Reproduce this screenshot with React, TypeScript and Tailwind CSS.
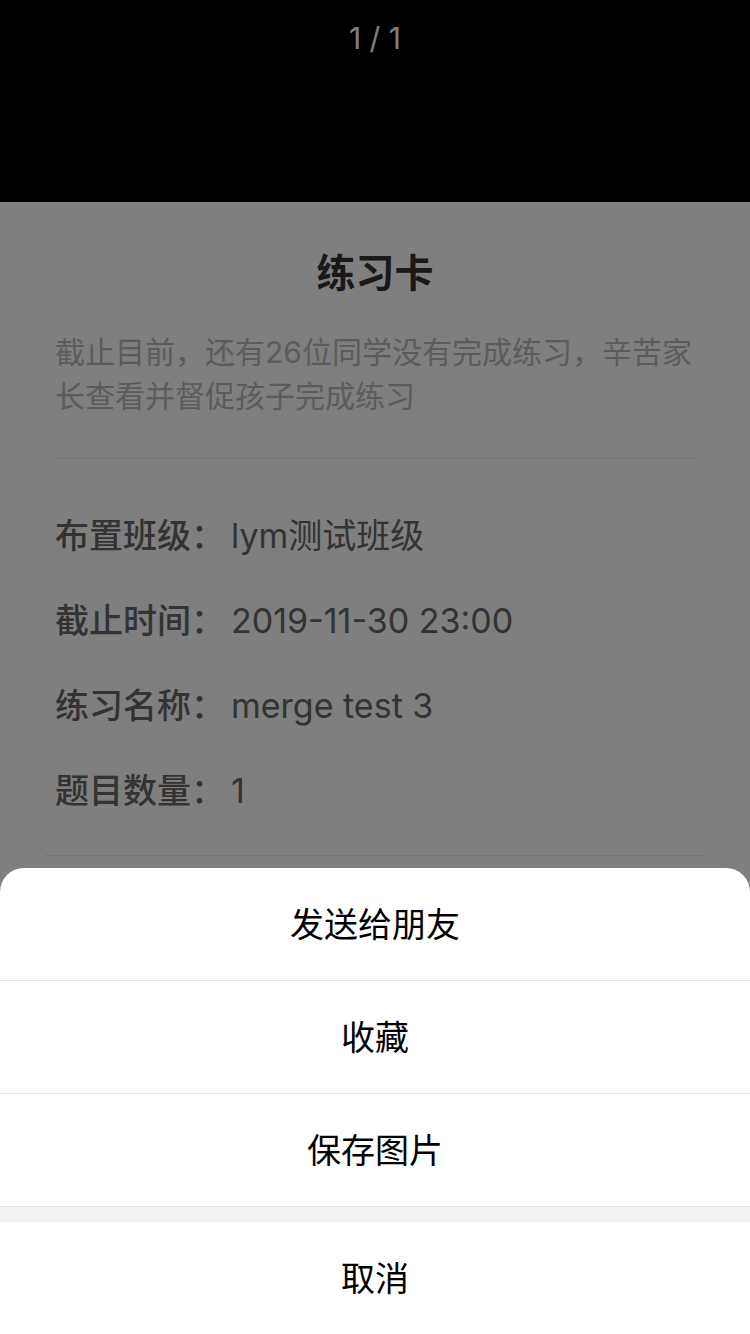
const font = { fontFamily: 'Inter, "Noto Sans CJK SC", sans-serif' };

const rows = [
  { label: '布置班级：', value: 'lym测试班级' },
  { label: '截止时间：', value: '2019-11-30 23:00' },
  { label: '练习名称：', value: 'merge test 3' },
  { label: '题目数量：', value: '1' },
];

const actions = ['发送给朋友', '收藏', '保存图片'];

export default function App() {
  return (
    <div className="relative h-[1334px] w-[750px] overflow-hidden bg-white" style={font}>
      {/* preview header */}
      <div className="flex h-[202px] justify-center bg-black pt-[20px]">
        <span className="text-[30px] leading-[36px] text-white">1 / 1</span>
      </div>

      {/* practice card */}
      <div className="flex flex-col bg-white pt-[47px]">
        <h1 className="text-center text-[39px] font-bold leading-[48px] text-[#333]">练习卡</h1>
        <p className="mx-[55px] mt-[33px] text-[30px] leading-[44px] text-[#b9b9b9]">
          截止目前，还有26位同学没有完成练习，辛苦家长查看并督促孩子完成练习
        </p>
        <div className="mx-[55px] mt-[40px] h-px bg-[#e8e8e8]" />
        <div className="mx-[55px] mt-[54px] flex flex-col gap-[41px]">
          {rows.map((r) => (
            <div key={r.label} className="flex h-[44px] items-center text-[34px] text-[#666]">
              <span className="w-[176px] font-medium">{r.label}</span>
              <span>{r.value}</span>
            </div>
          ))}
        </div>
        <div className="mx-[45px] mt-[43px] h-px bg-[#e8e8e8]" />
      </div>

      {/* mask */}
      <div className="absolute inset-0 bg-black/50" />

      {/* action sheet */}
      <div className="absolute inset-x-0 bottom-0 overflow-hidden rounded-t-[24px] bg-white">
        {actions.map((a) => (
          <div
            key={a}
            className="flex h-[113px] items-center justify-center border-b border-[#e5e5e5] text-[34px] text-black"
          >
            {a}
          </div>
        ))}
        <div className="h-[15px] bg-[#f2f2f2]" />
        <div className="flex h-[112px] items-center justify-center text-[34px] text-black">取消</div>
      </div>
    </div>
  );
}
